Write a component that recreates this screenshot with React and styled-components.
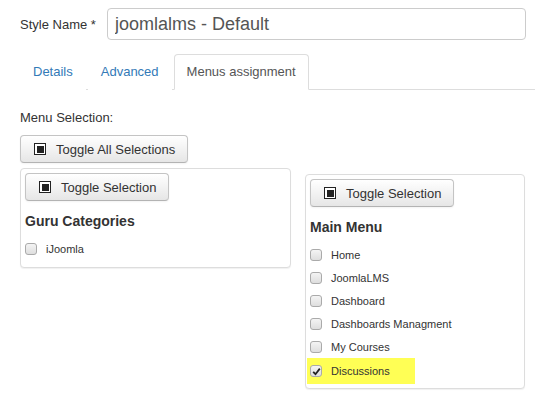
import React from 'react';
import styled, { createGlobalStyle } from 'styled-components';

const GlobalStyle = createGlobalStyle`
  html, body { margin: 0; padding: 0; background: #fff; }
  body {
    font-family: "Liberation Sans", Arial, sans-serif;
    font-size: 13px;
    color: #333;
  }
`;

const Page = styled.div`
  width: 535px;
  height: 407px;
  padding: 8px 9px 0 20px;
  box-sizing: border-box;
  overflow: hidden;
`;

const FieldRow = styled.div`
  display: flex;
  align-items: center;
`;

const FieldLabel = styled.label`
  width: 87px;
  font-size: 13px;
  color: #333;
`;

const TextInput = styled.input`
  flex: 1;
  height: 32px;
  box-sizing: border-box;
  border: 1px solid #ccc;
  border-radius: 4px;
  padding: 0 7px;
  font-family: "Liberation Sans", Arial, sans-serif;
  font-size: 18px;
  color: #555;
  outline: none;
`;

const Tabs = styled.ul`
  display: flex;
  list-style: none;
  margin: 14px -9px 0 0;
  padding: 0;
  border-bottom: 1px solid #ddd;
`;

const Tab = styled.li`
  margin-right: 2px;
  margin-bottom: -1px;
  padding: 8px 12px;
  line-height: 18px;
  font-size: 13px;
  border: 1px solid ${(p) => (p.$active ? '#ddd' : 'transparent')};
  border-bottom-color: ${(p) => (p.$active ? '#fff' : 'transparent')};
  border-radius: 4px 4px 0 0;
  background: #fff;
  color: ${(p) => (p.$active ? '#555' : '#337ab7')};
`;

const SectionLabel = styled.div`
  margin-top: 20px;
  font-size: 13px;
  color: #333;
`;

const Columns = styled.div`
  display: flex;
  align-items: flex-start;
  margin-top: 10px;
`;

const LeftColumn = styled.div`
  width: 271px;
  display: flex;
  flex-direction: column;
  align-items: flex-start;
`;

const RightColumn = styled.div`
  margin-left: 14px;
  padding-top: 39px;
`;

const Button = styled.button`
  display: inline-flex;
  align-items: center;
  gap: 10px;
  height: 28px;
  box-sizing: border-box;
  padding: 0 12px 0 13px;
  border: 1px solid #c4c4c4;
  border-bottom-color: #b3b3b3;
  border-radius: 4px;
  background: linear-gradient(to bottom, #ffffff, #e6e6e6);
  box-shadow: inset 0 1px 0 rgba(255, 255, 255, 0.2), 0 1px 2px rgba(0, 0, 0, 0.05);
  font-family: "Liberation Sans", Arial, sans-serif;
  font-size: 13px;
  color: #333;
  cursor: pointer;
`;

const ToggleIcon = styled.span`
  width: 12px;
  height: 12px;
  box-sizing: border-box;
  border: 1.5px solid #222;
  background: #fff;
  padding: 1.5px;
  display: inline-flex;

  &::after {
    content: '';
    flex: 1;
    background: #222;
  }
`;

const Panel = styled.div`
  box-sizing: border-box;
  width: ${(p) => p.$width}px;
  margin-top: ${(p) => p.$offset || 0}px;
  padding: 4px 4px 9px 4px;
  border: 1px solid #ddd;
  border-radius: 4px;
  box-shadow: 0 1px 1px rgba(0, 0, 0, 0.06);
  background: #fff;
`;

const MenuTitle = styled.h4`
  margin: 12px 0 11px 0;
  font-size: 14px;
  font-weight: bold;
  color: #333;
`;

const ItemList = styled.div`
  display: flex;
  flex-direction: column;
  align-items: flex-start;
  gap: 5px;
`;

const Item = styled.label`
  display: flex;
  align-items: center;
  gap: 9px;
  height: 18px;
  padding: ${(p) => (p.$highlight ? '4px 25px 4px 3px' : '0')};
  margin: ${(p) => (p.$highlight ? '-3px 0 -5px -3px' : '0')};
  background: ${(p) => (p.$highlight ? '#ffff55' : 'transparent')};
  font-size: 11px;
  color: #333;
`;

const Box = styled.span`
  width: 12px;
  height: 12px;
  box-sizing: border-box;
  border: 1px solid #aaa;
  border-radius: 3px;
  background: linear-gradient(to bottom, #f4f4f4, #dedede);
  display: inline-flex;
  align-items: center;
  justify-content: center;
`;

const Check = () => (
  <svg width="9" height="9" viewBox="0 0 9 9">
    <path d="M1.2 4.8 L3.5 7.2 L7.8 1.6" fill="none" stroke="#222" strokeWidth="1.8" />
  </svg>
);

const MenuItem = ({ label, checked }) => (
  <Item $highlight={checked}>
    <Box>{checked && <Check />}</Box>
    {label}
  </Item>
);

const ToggleButton = ({ children }) => (
  <Button type="button">
    <ToggleIcon />
    {children}
  </Button>
);

const mainMenu = [
  { label: 'Home' },
  { label: 'JoomlaLMS' },
  { label: 'Dashboard' },
  { label: 'Dashboards Managment' },
  { label: 'My Courses' },
  { label: 'Discussions', checked: true },
];

export default function App() {
  return (
    <Page>
      <GlobalStyle />
      <FieldRow>
        <FieldLabel>Style Name *</FieldLabel>
        <TextInput defaultValue="joomlalms - Default" />
      </FieldRow>

      <Tabs>
        <Tab>Details</Tab>
        <Tab>Advanced</Tab>
        <Tab $active>Menus assignment</Tab>
      </Tabs>

      <SectionLabel>Menu Selection:</SectionLabel>

      <Columns>
        <LeftColumn>
          <ToggleButton>Toggle All Selections</ToggleButton>
          <Panel $width={271} $offset={5}>
            <ToggleButton>Toggle Selection</ToggleButton>
            <MenuTitle>Guru Categories</MenuTitle>
            <ItemList>
              <MenuItem label="iJoomla" />
            </ItemList>
          </Panel>
        </LeftColumn>
        <RightColumn>
          <Panel $width={220}>
            <ToggleButton>Toggle Selection</ToggleButton>
            <MenuTitle>Main Menu</MenuTitle>
            <ItemList>
              {mainMenu.map((m) => (
                <MenuItem key={m.label} label={m.label} checked={m.checked} />
              ))}
            </ItemList>
          </Panel>
        </RightColumn>
      </Columns>
    </Page>
  );
}
